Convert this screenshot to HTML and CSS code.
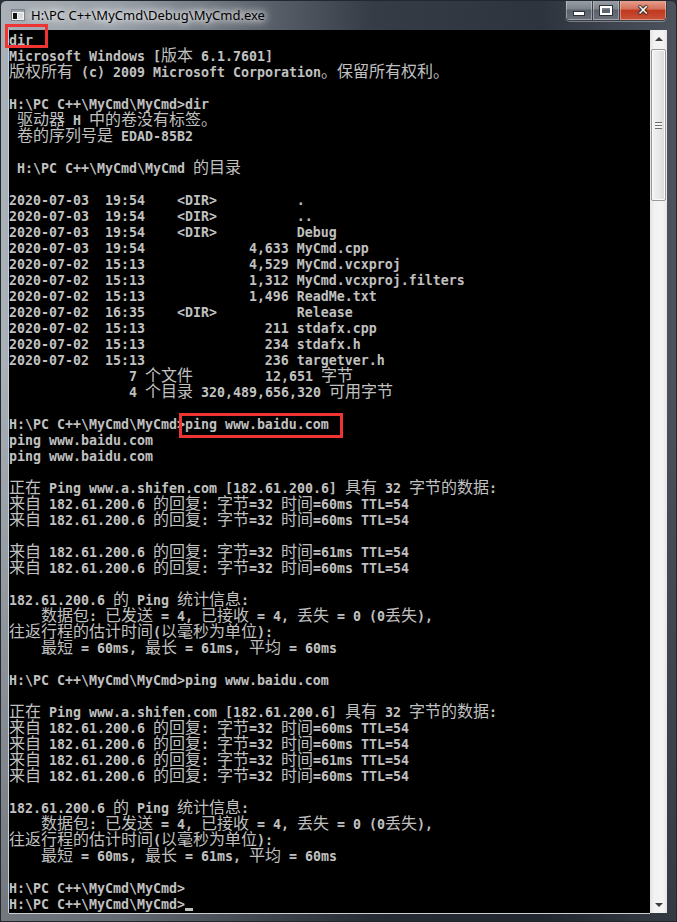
FILE: index.html
```html
<!DOCTYPE html>
<html>
<head>
<meta charset="UTF-8">
<title>MyCmd.exe</title>
<link rel="stylesheet" href="styles.css">
</head>
<body>

<div class="window">

<!-- TITLE BAR -->
<div class="titlebar">
  <svg class="app-icon" width="14" height="12" viewBox="0 0 14 12">
    <rect x="0.5" y="0.5" width="13" height="11" fill="#f4f4f4" stroke="#7d8288"/>
    <rect x="1" y="1" width="12" height="2" fill="#9aa4b0"/>
    <rect x="2" y="4" width="4" height="6" fill="#111"/>
    <rect x="7" y="4" width="5" height="6" fill="#d8dadc"/>
  </svg>
  <span class="title">H:\PC C++\MyCmd\Debug\MyCmd.exe</span>
  <div class="caption-btns">
    <div class="cbtn min"><span class="min-bar"></span></div>
    <div class="cbtn max"><span class="max-box"></span></div>
    <div class="cbtn close"><span class="close-x">✕</span></div>
  </div>
</div>

<!-- CONSOLE + SCROLLBAR -->
<div class="client">
<div class="console">
<div class="line">dir</div>
<div class="line">Microsoft Windows [<span class="c">版本</span> 6.1.7601]</div>
<div class="line"><span class="c">版权所有</span> (c) 2009 Microsoft Corporation<span class="c">。保留所有权利。</span></div>
<div class="line"></div>
<div class="line">H:\PC C++\MyCmd\MyCmd&gt;dir</div>
<div class="line"> <span class="c">驱动器</span> H <span class="c">中的卷没有标签。</span></div>
<div class="line"> <span class="c">卷的序列号是</span> EDAD-85B2</div>
<div class="line"></div>
<div class="line"> H:\PC C++\MyCmd\MyCmd <span class="c">的目录</span></div>
<div class="line"></div>
<div class="line">2020-07-03  19:54    &lt;DIR&gt;          .</div>
<div class="line">2020-07-03  19:54    &lt;DIR&gt;          ..</div>
<div class="line">2020-07-03  19:54    &lt;DIR&gt;          Debug</div>
<div class="line">2020-07-03  19:54             4,633 MyCmd.cpp</div>
<div class="line">2020-07-02  15:13             4,529 MyCmd.vcxproj</div>
<div class="line">2020-07-02  15:13             1,312 MyCmd.vcxproj.filters</div>
<div class="line">2020-07-02  15:13             1,496 ReadMe.txt</div>
<div class="line">2020-07-02  16:35    &lt;DIR&gt;          Release</div>
<div class="line">2020-07-02  15:13               211 stdafx.cpp</div>
<div class="line">2020-07-02  15:13               234 stdafx.h</div>
<div class="line">2020-07-02  15:13               236 targetver.h</div>
<div class="line">               7 <span class="c">个文件</span>         12,651 <span class="c">字节</span></div>
<div class="line">               4 <span class="c">个目录</span> 320,489,656,320 <span class="c">可用字节</span></div>
<div class="line"></div>
<div class="line">H:\PC C++\MyCmd\MyCmd&gt;ping www.baidu.com</div>
<div class="line">ping www.baidu.com</div>
<div class="line">ping www.baidu.com</div>
<div class="line"></div>
<div class="line"><span class="c">正在</span> Ping www.a.shifen.com [182.61.200.6] <span class="c">具有</span> 32 <span class="c">字节的数据</span>:</div>
<div class="line"><span class="c">来自</span> 182.61.200.6 <span class="c">的回复</span>: <span class="c">字节</span>=32 <span class="c">时间</span>=60ms TTL=54</div>
<div class="line"><span class="c">来自</span> 182.61.200.6 <span class="c">的回复</span>: <span class="c">字节</span>=32 <span class="c">时间</span>=60ms TTL=54</div>
<div class="line"></div>
<div class="line"><span class="c">来自</span> 182.61.200.6 <span class="c">的回复</span>: <span class="c">字节</span>=32 <span class="c">时间</span>=61ms TTL=54</div>
<div class="line"><span class="c">来自</span> 182.61.200.6 <span class="c">的回复</span>: <span class="c">字节</span>=32 <span class="c">时间</span>=60ms TTL=54</div>
<div class="line"></div>
<div class="line">182.61.200.6 <span class="c">的</span> Ping <span class="c">统计信息</span>:</div>
<div class="line">    <span class="c">数据包</span>: <span class="c">已发送</span> = 4, <span class="c">已接收</span> = 4, <span class="c">丢失</span> = 0 (0<span class="c">丢失</span>),</div>
<div class="line"><span class="c">往返行程的估计时间</span>(<span class="c">以毫秒为单位</span>):</div>
<div class="line">    <span class="c">最短</span> = 60ms, <span class="c">最长</span> = 61ms, <span class="c">平均</span> = 60ms</div>
<div class="line"></div>
<div class="line">H:\PC C++\MyCmd\MyCmd&gt;ping www.baidu.com</div>
<div class="line"></div>
<div class="line"><span class="c">正在</span> Ping www.a.shifen.com [182.61.200.6] <span class="c">具有</span> 32 <span class="c">字节的数据</span>:</div>
<div class="line"><span class="c">来自</span> 182.61.200.6 <span class="c">的回复</span>: <span class="c">字节</span>=32 <span class="c">时间</span>=60ms TTL=54</div>
<div class="line"><span class="c">来自</span> 182.61.200.6 <span class="c">的回复</span>: <span class="c">字节</span>=32 <span class="c">时间</span>=60ms TTL=54</div>
<div class="line"><span class="c">来自</span> 182.61.200.6 <span class="c">的回复</span>: <span class="c">字节</span>=32 <span class="c">时间</span>=61ms TTL=54</div>
<div class="line"><span class="c">来自</span> 182.61.200.6 <span class="c">的回复</span>: <span class="c">字节</span>=32 <span class="c">时间</span>=60ms TTL=54</div>
<div class="line"></div>
<div class="line">182.61.200.6 <span class="c">的</span> Ping <span class="c">统计信息</span>:</div>
<div class="line">    <span class="c">数据包</span>: <span class="c">已发送</span> = 4, <span class="c">已接收</span> = 4, <span class="c">丢失</span> = 0 (0<span class="c">丢失</span>),</div>
<div class="line"><span class="c">往返行程的估计时间</span>(<span class="c">以毫秒为单位</span>):</div>
<div class="line">    <span class="c">最短</span> = 60ms, <span class="c">最长</span> = 61ms, <span class="c">平均</span> = 60ms</div>
<div class="line"></div>
<div class="line">H:\PC C++\MyCmd\MyCmd&gt;</div>
<div class="line">H:\PC C++\MyCmd\MyCmd&gt;<span class="cursor"></span></div>

<!-- red marks -->
<div class="mark mark-dir"></div>
<div class="mark mark-ping"></div>
</div>

<div class="scrollbar">
  <div class="sb-btn"><span class="arrow-up"></span></div>
  <div class="sb-thumb"><span class="grip"></span></div>
  <div class="sb-space"></div>
  <div class="sb-btn"><span class="arrow-down"></span></div>
</div>
</div>

</div>

</body>
</html>
```

FILE: styles.css
```css
body{
    margin:0;
    background:#2b3139;
}

.window{
    width:677px;
    height:922px;
    box-sizing:border-box;
    display:flex;
    flex-direction:column;
    border:1px solid #23282e;
    border-radius:6px 6px 0 0;
    background:
        linear-gradient(180deg, rgba(255,255,255,0) 0, rgba(255,255,255,0) 40%, rgba(10,14,20,0.35) 100%),
        linear-gradient(90deg, #aab0b7 0%, #959ca4 18%, #5d646d 38%, #363c45 55%, #2e343d 80%, #4c535c 100%);
    overflow:hidden;
}

/* TITLE BAR */
.titlebar{
    height:30px;
    display:flex;
    align-items:center;
    position:relative;
    padding-left:10px;
}

.app-icon{
    margin-top:-1px;
}

.title{
    margin-left:6px;
    margin-top:-1px;
    font-family:"Noto Sans", Arial, sans-serif;
    font-size:13px;
    color:#000;
    text-shadow:0 0 6px #fff, 0 0 10px #fff, 0 0 14px rgba(255,255,255,0.8);
}

.caption-btns{
    position:absolute;
    top:-1px;
    right:9px;
    display:flex;
    height:20px;
    border:1px solid #3b4048;
    border-top:none;
    border-radius:0 0 5px 5px;
    overflow:hidden;
    box-shadow:0 1px 0 rgba(255,255,255,0.35);
}

.cbtn{
    display:flex;
    align-items:center;
    justify-content:center;
    height:20px;
    box-sizing:border-box;
    border-right:1px solid #3b4048;
}

.cbtn.min,
.cbtn.max{
    width:27px;
    background:linear-gradient(180deg, #9ba1a8 0%, #7c838b 45%, #5b626b 50%, #6a7179 100%);
    box-shadow:inset 0 0 0 1px rgba(255,255,255,0.35);
}

.cbtn.close{
    width:46px;
    border-right:none;
    background:linear-gradient(180deg, #e9a493 0%, #d4705a 45%, #c0391f 52%, #c9523a 100%);
    box-shadow:inset 0 0 0 1px rgba(255,220,210,0.45);
}

.min-bar{
    width:10px;
    height:3px;
    margin-top:6px;
    background:#fff;
    border:1px solid #2e333a;
}

.max-box{
    width:8px;
    height:5px;
    border:2px solid #fff;
    outline:1px solid #2e333a;
}

.close-x{
    font-family:"DejaVu Sans", sans-serif;
    font-weight:bold;
    font-size:14px;
    color:#fff;
    text-shadow:0 0 1px #30251f, 1px 0 1px #30251f, -1px 0 1px #30251f, 0 1px 1px #30251f, 0 -1px 1px #30251f;
}

/* CLIENT */
.client{
    flex:1;
    display:flex;
    padding:0 9px 8px 8px;
}

.console{
    width:641px;
    position:relative;
    background:#000;
    padding-top:3px;
    box-sizing:border-box;
    color:#c0c0c0;
    font-family:"DejaVu Sans Mono", "Liberation Mono", monospace;
    font-weight:bold;
    font-size:13.29px;
    box-shadow:-1px 0 0 #c9ced3, 0 1px 0 #c9ced3;
}

.line{
    height:16px;
    line-height:16px;
    white-space:pre;
}

.c{
    font-family:"Noto Sans CJK SC", sans-serif;
    font-weight:normal;
    font-size:16px;
    line-height:0;
}

.cursor{
    display:inline-block;
    width:8px;
    height:3px;
    background:#c0c0c0;
    vertical-align:-2px;
}

.mark{
    position:absolute;
    border:3px solid #ef3434;
}

.mark-dir{
    left:-4px;
    top:-6px;
    width:37px;
    height:18px;
}

.mark-ping{
    left:170px;
    top:383px;
    width:158px;
    height:19px;
}

/* SCROLLBAR */
.scrollbar{
    width:17px;
    display:flex;
    flex-direction:column;
    background:linear-gradient(90deg, #e3e3e3 0%, #f2f2f2 25%, #f4f4f4 75%, #e6e6e6 100%);
}

.sb-btn{
    height:17px;
    display:flex;
    align-items:center;
    justify-content:center;
}

.arrow-up{
    width:0;
    height:0;
    border-left:4px solid transparent;
    border-right:4px solid transparent;
    border-bottom:4px solid #3c3c3c;
}

.arrow-down{
    width:0;
    height:0;
    border-left:4px solid transparent;
    border-right:4px solid transparent;
    border-top:4px solid #3c3c3c;
}

.sb-thumb{
    height:152px;
    margin:2px 1px 0 1px;
    box-sizing:border-box;
    border:1px solid #979797;
    border-radius:2px;
    background:linear-gradient(90deg, #f3f3f3 0%, #e9e9e9 50%, #d9d9d9 100%);
    box-shadow:inset 0 0 0 1px #fafafa;
    display:flex;
    align-items:center;
    justify-content:center;
}

.grip{
    width:7px;
    height:7px;
    background:repeating-linear-gradient(180deg, #6e6e6e 0, #6e6e6e 1px, #f6f6f6 1px, #f6f6f6 3px);
}

.sb-space{
    flex:1;
}
```
